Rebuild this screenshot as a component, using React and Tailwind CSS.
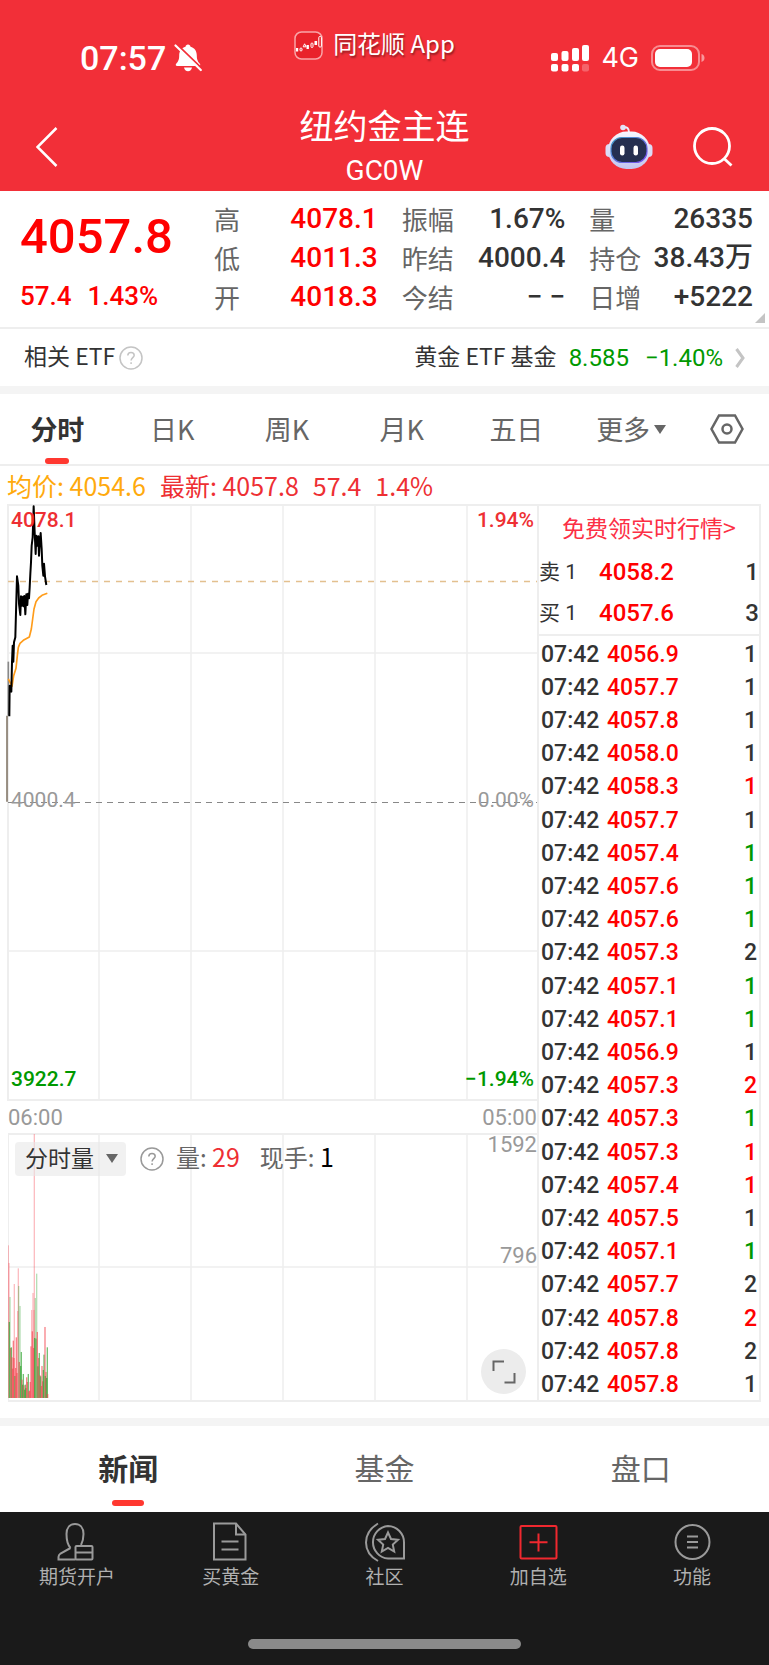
import React, { useState } from "react";

const quoteColumns = [
  [
    { label: "高", value: "4078.1", color: "text-[#ff0000]" },
    { label: "低", value: "4011.3", color: "text-[#ff0000]" },
    { label: "开", value: "4018.3", color: "text-[#ff0000]" },
  ],
  [
    { label: "振幅", value: "1.67%", color: "text-[#333333]" },
    { label: "昨结", value: "4000.4", color: "text-[#333333]" },
    { label: "今结", value: "− −", color: "text-[#333333]" },
  ],
  [
    { label: "量", value: "26335", color: "text-[#333333]" },
    { label: "持仓", value: "38.43万", color: "text-[#333333]" },
    { label: "日增", value: "+5222", color: "text-[#333333]" },
  ],
];

const periods = ["分时", "日K", "周K", "月K", "五日"];

const orders = [
  { side: "卖 1", price: "4058.2", size: 1 },
  { side: "买 1", price: "4057.6", size: 3 },
];

const sideColors = {
  buy: "text-[#ff0000]",
  sell: "text-[#009900]",
  flat: "text-[#333333]",
};

const trades = [
  ["4056.9", 1, "flat"],
  ["4057.7", 1, "flat"],
  ["4057.8", 1, "flat"],
  ["4058.0", 1, "flat"],
  ["4058.3", 1, "buy"],
  ["4057.7", 1, "flat"],
  ["4057.4", 1, "sell"],
  ["4057.6", 1, "sell"],
  ["4057.6", 1, "sell"],
  ["4057.3", 2, "flat"],
  ["4057.1", 1, "sell"],
  ["4057.1", 1, "sell"],
  ["4056.9", 1, "flat"],
  ["4057.3", 2, "buy"],
  ["4057.3", 1, "sell"],
  ["4057.3", 1, "buy"],
  ["4057.4", 1, "buy"],
  ["4057.5", 1, "flat"],
  ["4057.1", 1, "sell"],
  ["4057.7", 2, "flat"],
  ["4057.8", 2, "buy"],
  ["4057.8", 2, "flat"],
  ["4057.8", 1, "flat"],
];

const sections = ["新闻", "基金", "盘口"];

// [x, height, up] of every minute bar, in thirds of a pixel
const volumeBars = [
  [24, 458, true], [26, 405, true], [27, 228, false], [29, 303, false],
  [31, 150, true], [33, 152, false], [35, 122, true], [37, 88, true],
  [39, 172, true], [41, 120, true], [42, 342, true], [44, 66, false],
  [46, 90, true], [48, 182, true], [50, 75, true], [52, 261, true],
  [54, 389, true], [55, 336, false], [57, 108, true], [59, 276, false],
  [61, 96, false], [63, 138, false], [65, 55, true], [67, 40, false],
  [69, 72, false], [71, 38, true], [73, 25, false], [75, 40, false],
  [77, 30, false], [79, 62, true], [81, 48, true], [84, 72, false],
  [86, 20, true], [88, 22, true], [90, 48, true], [92, 155, true],
  [94, 264, true], [96, 200, true], [98, 315, true], [100, 150, true],
  [101, 264, true], [102, 792, true], [103, 180, false], [105, 300, false],
  [107, 178, false], [109, 373, false], [111, 198, true], [113, 95, false],
  [115, 120, true], [117, 135, false], [119, 68, true], [121, 65, false],
  [123, 36, true], [125, 96, true], [127, 50, true], [129, 84, false],
  [131, 130, false], [134, 213, true], [135, 66, false], [137, 78, true],
  [139, 60, false], [141, 152, false], [142, 12, true],
];

const SilentBell = () => (
  <svg viewBox="0 0 28 28" className="w-7 h-7" aria-hidden="true">
    <path
      d="M14 0.500c-1.500 0-2.300 1-2.500 2.200C7.500 3.800 5.200 7 5.200 11.500c0 5-1.600 6.500-3 8.200-.9 1.100-.5 2.300 1 2.300h21.600c1.500 0 1.900-1.200 1-2.300-1.400-1.700-3-3.200-3-8.200 0-4.500-2.300-7.700-6.300-8.800C16.300 1.500 15.500.5 14 .5z"
      fill="#fff"
    />
    <path d="M10 23.500h8c-.4 2.300-2 3.800-4 3.800s-3.600-1.500-4-3.800z" fill="#fff" />
    <path d="M3 0.500L28.500 25" stroke="#f22f38" strokeWidth="2" />
    <path d="M1.500 1.500L26.800 26" stroke="#fff" strokeWidth="2.200" strokeLinecap="round" />
  </svg>
);

const AppBadge = () => (
  <svg viewBox="0 0 29 29" className="w-[29px] h-[29px]" aria-hidden="true">
    <rect x="1" y="1" width="27" height="27" rx="6.500" fill="#e9222b" stroke="#f9a5a8" strokeWidth="1.500" />
    <g fill="#fff">
      <rect x="2" y="17" width="2.200" height="3.500" />
      <rect x="12.500" y="14" width="2.400" height="4" />
      <rect x="20.500" y="10" width="2.600" height="4" />
    </g>
    <g fill="none" stroke="#fff" strokeWidth="1">
      <rect x="6" y="17" width="2" height="3" rx="1" />
      <path d="M9.200 15.800l1.400-3 1.500 3z" />
      <rect x="17" y="12" width="2" height="4.500" rx="1" />
      <rect x="24.800" y="5.500" width="2.600" height="10.500" rx="1" />
    </g>
  </svg>
);

const Signal = () => (
  <svg viewBox="0 0 38 28" className="w-[38px] h-7" fill="#fff" aria-hidden="true">
    <rect x="0" y="9" width="7" height="8" rx="2" />
    <rect x="10.500" y="7" width="7" height="10" rx="2" />
    <rect x="21" y="4" width="7" height="13" rx="2" />
    <rect x="31" y="1" width="7" height="16" rx="2" />
    <rect x="0" y="20" width="7" height="7.500" rx="2" />
    <rect x="10.500" y="20" width="7" height="7.500" rx="2" />
    <rect x="21" y="20" width="7" height="7.500" rx="2" />
    <rect x="31" y="20" width="7" height="7.500" rx="2" opacity="0.25" />
  </svg>
);

const Battery = () => (
  <svg viewBox="0 0 54 26" className="w-[54px] h-[26px]" aria-hidden="true">
    <rect x="1" y="1" width="47" height="24" rx="8" fill="none" stroke="#fff" strokeOpacity="0.45" strokeWidth="2" />
    <rect x="4" y="4" width="37" height="18" rx="5" fill="#fff" />
    <path d="M50.500 9c2 .6 3 2.200 3 4s-1 3.400-3 4z" fill="#fff" fillOpacity="0.5" />
  </svg>
);

const Robot = () => (
  <svg viewBox="0 0 48 46" className="w-12 h-[46px]" aria-hidden="true">
    <defs>
      <linearGradient id="shell" x1="0" y1="0" x2="0" y2="1">
        <stop offset="0" stopColor="#f7f7ff" />
        <stop offset="1" stopColor="#c3c5ef" />
      </linearGradient>
      <linearGradient id="rim" x1="0" y1="0" x2="1" y2="1">
        <stop offset="0" stopColor="#3fa0c6" />
        <stop offset="1" stopColor="#7a4df0" />
      </linearGradient>
    </defs>
    <path d="M18 3.500c4-1 6 .5 6 5" fill="none" stroke="#eeeefc" strokeWidth="2" />
    <circle cx="18" cy="3.500" r="2.800" fill="#e3e3f8" />
    <rect x="0.500" y="20" width="8" height="13" rx="4" fill="#dcdcf6" />
    <rect x="39.500" y="20" width="8" height="13" rx="4" fill="#dcdcf6" />
    <rect x="3" y="7.500" width="42" height="37.500" rx="18.500" fill="url(#shell)" />
    <rect x="6" y="13.500" width="36" height="25" rx="11" fill="#252f50" stroke="url(#rim)" strokeWidth="1.200" />
    <rect x="15" y="21.500" width="4.500" height="10" rx="2.200" fill="#fff" />
    <rect x="28.500" y="21.500" width="4.500" height="10" rx="2.200" fill="#fff" />
  </svg>
);

const HelpIcon = ({ className }) => (
  <svg viewBox="0 0 24 24" className={className} fill="none" stroke="currentColor" strokeWidth="1.500" aria-hidden="true">
    <circle cx="12" cy="12" r="11" />
    <path d="M8.800 9.600c0-2 1.400-3.200 3.200-3.200s3.200 1.100 3.200 2.900c0 2.200-3.100 2.600-3.100 5.200" />
    <path d="M12.100 16.200v1.800" />
  </svg>
);

const Caret = () => (
  <svg viewBox="0 0 12 9" className="w-3 h-[9px]" fill="#666" aria-hidden="true">
    <path d="M0 0h12L6 9z" />
  </svg>
);

const PriceChart = () => (
  <svg
    viewBox="0 0 529 597"
    preserveAspectRatio="none"
    className="absolute inset-0 w-full h-full overflow-visible"
    aria-hidden="true"
  >
    <g stroke="#eeeeee" strokeWidth="2">
      <path d="M0 1H529M0 596H529M0 0V597" />
      <path d="M91 0V597M183 0V597M275 0V597M367 0V597M459 0V597" strokeWidth="1.500" />
      <path d="M0 149H529M0 447H529" strokeWidth="1.500" />
    </g>
    <path d="M0 77.500H529" stroke="#e3c08f" strokeWidth="1.500" strokeDasharray="6 6" />
    <path d="M0 298.500H529" stroke="#888" strokeWidth="1" strokeDasharray="6 5" />
    <g transform="translate(-8 -5) scale(0.3333)" fill="none" strokeLinejoin="round">
      <path d="M21 908V650" stroke="#6b5d4c" strokeWidth="4" />
      <path d="M25 650V488" stroke="#888" strokeWidth="5" />
      <path
        d="M25 540L36 562L41 530L48 508L52 470L55 445L60 433L70 424L88 414L94 390L98 360L102 330L108 308L116 297L126 289L142 283"
        stroke="#ff9c1a"
        strokeWidth="5"
      />
      <path
        d="M28 652L29 560L34 578L36 490L38 440L40 488L42 430L46 415L48 340L51 232L55 260L57 315L61 348L63 292L66 320L69 293L71 322L73 291L76 346L79 286L82 318L84 284L87 298L89 265L91 225L93 190L95 140L98 115L101 22L104 100L107 165L109 110L112 140L115 112L117 170L119 135L122 102L125 150L127 200L130 230L132 194L135 232L139 258"
        stroke="#000"
        strokeWidth="6"
      />
    </g>
  </svg>
);

const VolumeChart = () => (
  <svg
    viewBox="0 0 529 269"
    preserveAspectRatio="none"
    className="absolute inset-0 w-full h-full"
    aria-hidden="true"
  >
    <g stroke="#eeeeee" strokeWidth="2">
      <path d="M0 1H529M0 268H529M0 0V269" />
      <path d="M91 0V269M183 0V269M275 0V269M367 0V269M459 0V269" strokeWidth="1.500" />
      <path d="M0 134H529" strokeWidth="1.500" />
    </g>
    <g transform="translate(-8 -13) scale(0.3333)">
      {volumeBars.map(([x, height, up]) => (
        <rect
          key={x}
          x={x - 1}
          y={834 - height}
          width="4"
          height={height}
          fill={up ? "#f5424d" : "#2aa02a"}
          fillOpacity={height > 250 ? 0.35 : 0.65}
        />
      ))}
    </g>
  </svg>
);

const navIcons = {
  account: (
    <>
      <path d="M13.500 26C10 22 9.500 18 9.500 12C9.500 5.500 13 2 18 2S26.500 5.500 26.500 12C26.500 17 25.500 20 24 23" />
      <path d="M13.500 26L3.500 31.500C2 32.500 1.500 33 1.500 35V37.500H18.500" />
      <rect x="18.500" y="24" width="17" height="13.500" rx="1" />
      <path d="M18.500 30.500h17" />
    </>
  ),
  gold: (
    <>
      <path d="M3 1.500h22l9.500 11V37.500H3z" />
      <path d="M25 1.500v11h9.500M10.500 19.500h17M10.500 27.500h17" />
    </>
  ),
  community: (
    <>
      <path d="M23 4a16.300 16.300 0 0 0 0 32.500H39V20.500A16.300 16.300 0 0 0 23 4z" />
      <path d="M13 1.500C4 7 1 13.500 1 20.500S4 34 13 39" />
      <path d="M23 10.500l3 6.500 7 .8-5.200 4.800 1.400 7L23 26l-6.200 3.600 1.400-7L13 17.800l7-.8z" />
    </>
  ),
  add: (
    <>
      <rect x="1.500" y="4" width="36" height="32.500" rx="1" />
      <path d="M19.500 11.500v18M10.500 20.300h18" />
    </>
  ),
  menu: (
    <>
      <circle cx="19.500" cy="20" r="17" />
      <path d="M14 14.500h11M14 20h11M14 25.500h11" />
    </>
  ),
};

const navItems = [
  { icon: "account", label: "期货开户", color: "text-[#9a9a9a]" },
  { icon: "gold", label: "买黄金", color: "text-[#9a9a9a]" },
  { icon: "community", label: "社区", color: "text-[#9a9a9a]" },
  { icon: "add", label: "加自选", color: "text-[#f0282f]" },
  { icon: "menu", label: "功能", color: "text-[#9a9a9a]" },
];

const Header = () => (
  <header className="bg-[#f22f38] text-white">
    <div className="grid grid-cols-3 h-[103px]">
      <div className="flex items-center self-start gap-2 pt-10 pl-20 h-[76px]">
        <span className="font-[Roboto] font-medium text-[34px] leading-9">07:57</span>
        <SilentBell />
      </div>
      <div className="flex items-center self-start justify-center pr-5 h-[90px] gap-[10px]">
        <AppBadge />
        <span className="text-[24px] leading-8 pb-1 [text-shadow:1px_2px_2px_rgba(0,0,0,0.4)]">同花顺 App</span>
      </div>
      <div className="flex items-center self-start justify-end gap-3 pt-10 pr-16 h-[76px]">
        <Signal />
        <span className="font-[Inter] text-[27px]">4G</span>
        <Battery />
      </div>
    </div>
    <div className="grid grid-cols-[1fr_auto_1fr] items-center h-22 px-9">
      <button type="button" aria-label="返回" className="justify-self-start">
        <svg viewBox="0 0 22 40" className="w-[22px] h-10" fill="none" stroke="#fff" strokeWidth="2.500">
          <path d="M20.500 1L1.500 20L20.500 39" />
        </svg>
      </button>
      <div className="text-center">
        <h1 className="text-[34px] leading-10">纽约金主连</h1>
        <p className="mt-2 font-[Roboto] text-[28px] leading-9">GC0W</p>
      </div>
      <div className="flex items-center gap-10 justify-self-end">
        <button type="button" aria-label="智能助手">
          <Robot />
        </button>
        <button type="button" aria-label="搜索">
          <svg viewBox="0 0 40 40" className="w-10 h-10" fill="none" stroke="#fff" strokeWidth="2.800">
            <circle cx="19" cy="19" r="17.500" />
            <path d="M31 31.500l7.500 7" />
          </svg>
        </button>
      </div>
    </div>
  </header>
);

const Quote = () => (
  <section className="relative flex pt-2 pb-[10px] pl-5 pr-4 border-b-2 border-[#eeeeee]">
    <div className="w-[194px] font-[Roboto] font-medium text-[#ff0000]">
      <div className="text-[49px] leading-[76px]">4057.8</div>
      <div className="flex gap-4 text-[26px] leading-[42px]">
        <span>57.4</span>
        <span>1.43%</span>
      </div>
    </div>
    <div className="grid flex-1 grid-cols-3 gap-x-6">
      {quoteColumns.map((column) => (
        <dl key={column[0].label}>
          {column.map((item) => (
            <div key={item.label} className="flex items-center justify-between h-[39px] whitespace-nowrap">
              <dt className="text-[26px] text-[#666666]">{item.label}</dt>
              <dd className={`font-[Roboto,'Noto_Sans_CJK_SC',sans-serif] font-medium text-[28px] ${item.color}`}>
                {item.value}
              </dd>
            </div>
          ))}
        </dl>
      ))}
    </div>
    <svg viewBox="0 0 10 10" className="absolute bottom-1 right-1 w-[10px] h-[10px]" fill="#c4c4c4" aria-hidden="true">
      <path d="M10 0V10H0z" />
    </svg>
  </section>
);

const RelatedEtf = () => (
  <a
    href="#etf"
    className="flex items-center justify-between h-[65px] px-6 border-b-8 border-[#f4f4f4] text-[23px] text-[#333333]"
  >
    <span className="flex items-center gap-1">
      <span className="pb-1">相关 ETF</span>
      <HelpIcon className="w-6 h-6 text-[#c4c4c4]" />
    </span>
    <span className="flex items-center gap-3">
      <span className="pb-1">黄金 ETF 基金</span>
      <span className="pr-1 font-[Roboto] text-[24px] text-[#009900]">8.585</span>
      <span className="font-[Roboto] text-[24px] text-[#009900]">−1.40%</span>
      <svg viewBox="0 0 10 20" className="w-[10px] h-5" fill="none" stroke="#c4c4c4" strokeWidth="3" aria-hidden="true">
        <path d="M1.500 1L8 10L1.500 19" />
      </svg>
    </span>
  </a>
);

const PeriodTabs = ({ active, onChange }) => (
  <nav className="flex h-[72px] border-b-2 border-[#eeeeee] text-[27px] text-[#666666]">
    {periods.map((period) => (
      <button
        key={period}
        type="button"
        className={`relative flex-3 ${period === active ? "font-bold text-[#333333]" : ""}`}
        onClick={() => onChange(period)}
      >
        {period}
        {period === active && (
          <span className="absolute bottom-0 left-1/2 w-6 h-[6px] -translate-x-1/2 rounded-[3px] bg-[#ff3830]" />
        )}
      </button>
    ))}
    <button type="button" className="flex items-center justify-center flex-3 gap-1">
      更多
      <Caret />
    </button>
    <button type="button" aria-label="设置" className="flex items-center justify-center flex-2 pr-1">
      <svg viewBox="0 0 34 30" className="w-[34px] h-[30px]" fill="none" stroke="#666" strokeWidth="2.500">
        <path d="M9 1.500h16L32.500 15L25 28.500H9L1.500 15z" />
        <circle cx="17" cy="15" r="4.500" />
      </svg>
    </button>
  </nav>
);

const Charts = () => (
  <div className="flex-1 font-[Roboto]">
    <div className="relative flex flex-col justify-between pt-[2px] h-[597px] text-[21px] leading-7">
      <PriceChart />
      <div className="relative flex justify-between px-[3px] font-medium text-[#ee2f33]">
        <span>4078.1</span>
        <span>1.94%</span>
      </div>
      <div className="relative flex justify-between px-[3px] text-[#999999]">
        <span>4000.4</span>
        <span>0.00%</span>
      </div>
      <div className="relative flex justify-between px-[3px] pb-2 font-medium text-[#009900]">
        <span>3922.7</span>
        <span>−1.94%</span>
      </div>
    </div>
    <div className="flex items-center justify-between h-8 text-[22px] text-[#999999]">
      <span>06:00</span>
      <span>05:00</span>
    </div>
    <div className="relative h-[269px]">
      <VolumeChart />
      <div className="relative flex items-start justify-between">
        <div className="flex items-center gap-3 pt-2 pl-[7px] text-[24px] text-[#666666]">
          <label className="relative flex items-center">
            <select
              aria-label="副图指标"
              className="h-[34px] w-[111px] pl-[10px] pb-1 appearance-none rounded bg-[#e8e8e8]/60 font-['Noto_Sans_CJK_SC',sans-serif] text-[23px] leading-[30px] text-[#333333]"
            >
              <option>分时量</option>
            </select>
            <span className="absolute right-2">
              <Caret />
            </span>
          </label>
          <HelpIcon className="w-6 h-6 ml-[2px] text-[#999999]" />
          <span className="pb-1 font-['Noto_Sans_CJK_SC',sans-serif] leading-[30px]">
            量: <span className="text-[25px] text-[#ee2f33]">29</span>
          </span>
          <span className="pb-1 pl-2 font-['Noto_Sans_CJK_SC',sans-serif] leading-[30px]">
            现手: <span className="text-[25px] text-black">1</span>
          </span>
        </div>
        <span className="text-[22px] leading-6 text-[#999999]">1592</span>
      </div>
      <span className="absolute right-0 bottom-1/2 text-[22px] leading-6 text-[#999999]">796</span>
      <button
        type="button"
        aria-label="全屏"
        className="absolute flex items-center justify-center rounded-full bottom-2 right-[11px] w-[45px] h-[45px] bg-[#ececec]"
      >
        <svg viewBox="0 0 24 24" className="w-6 h-6" fill="none" stroke="#666" strokeWidth="2">
          <path d="M1.500 11V1.500H12M12.500 22.500H22.500V13" />
        </svg>
      </button>
    </div>
  </div>
);

const OrderBook = () => (
  <div className="w-56 border-2 border-[#eeeeee] text-[#333333]">
    <a href="#realtime" className="block pb-1 text-center text-[23px] leading-[42px] text-[#fc2f45]">
      免费领实时行情&gt;
    </a>
    <table className="w-full h-[84px] border-b-2 border-[#eeeeee] font-[Roboto,'Noto_Sans_CJK_SC',sans-serif] text-[24px] leading-7">
      <tbody>
        {orders.map((order) => (
          <tr key={order.side}>
            <th className="w-[60px] text-left font-normal text-[21px]">{order.side}</th>
            <td className="font-medium text-[#ff0000]">{order.price}</td>
            <td className="font-medium text-right">{order.size}</td>
          </tr>
        ))}
      </tbody>
    </table>
    <table className="w-full h-[764px] font-[Roboto] font-medium text-[23px] leading-7">
      <tbody>
        {trades.map(([price, size, side], index) => (
          <tr key={index}>
            <td className="w-[68px] pt-1 pl-[2px]">07:42</td>
            <td className="pt-1 text-[#ff0000]">{price}</td>
            <td className={`pt-1 pr-[2px] text-right ${sideColors[side]}`}>{size}</td>
          </tr>
        ))}
      </tbody>
    </table>
  </div>
);

const App = () => {
  const [period, setPeriod] = useState("分时");
  const [section, setSection] = useState("新闻");

  return (
    <div className="flex flex-col min-h-screen bg-white font-['Noto_Sans_CJK_SC',sans-serif]">
      <Header />
      <Quote />
      <RelatedEtf />
      <PeriodTabs active={period} onChange={setPeriod} />
      <div className="flex gap-[14px] px-[7px] text-[25px] leading-[38px] text-[#ee2f33]">
        <span className="text-[#ffaa0d]">均价: 4054.6</span>
        <span>最新: 4057.8</span>
        <span>57.4</span>
        <span>1.4%</span>
      </div>
      <main className="flex px-2">
        <Charts />
        <OrderBook />
      </main>
      <nav className="grid grid-cols-3 mt-4 border-t-8 border-[#f4f4f4] text-[30px] text-[#666666]">
        {sections.map((name) => (
          <button
            key={name}
            type="button"
            className={`relative pb-1 h-[86px] ${name === section ? "font-bold text-[#333333]" : ""}`}
            onClick={() => setSection(name)}
          >
            {name}
            {name === section && (
              <span className="absolute bottom-[6px] left-1/2 w-8 h-[6px] -translate-x-1/2 rounded-[3px] bg-[#ff3830]" />
            )}
          </button>
        ))}
      </nav>
      <footer className="flex flex-col justify-between flex-1 pt-[10px] pb-4 bg-[#1a1a1a]">
        <div className="grid grid-cols-5">
          {navItems.map((item) => (
            <a key={item.label} href={`#${item.icon}`} className="flex flex-col items-center">
              <svg
                viewBox="0 0 39 40"
                className={`w-[39px] h-10 overflow-visible ${item.color}`}
                fill="none"
                stroke="currentColor"
                strokeWidth="2"
                aria-hidden="true"
              >
                {navIcons[item.icon]}
              </svg>
              <span className="text-[19px] leading-7 text-[#b0b0b0]">{item.label}</span>
            </a>
          ))}
        </div>
        <div className="self-center w-[273px] h-[10px] rounded-full bg-[#8a8a8a]" />
      </footer>
    </div>
  );
};

export default App;
